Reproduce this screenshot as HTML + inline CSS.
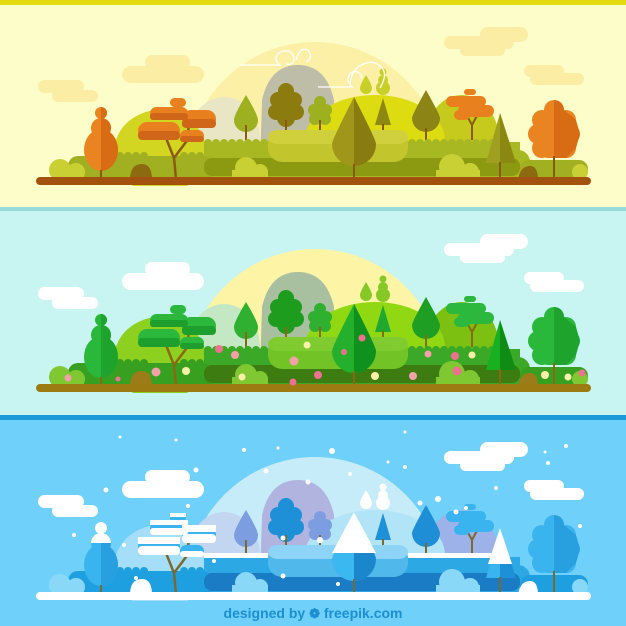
<!DOCTYPE html>
<html><head><meta charset="utf-8"><style>
html,body{margin:0;padding:0;width:626px;height:626px;overflow:hidden;background:#6fd0fa}
svg{display:block}
</style></head><body>
<svg width="626" height="626" viewBox="0 0 626 626" xmlns="http://www.w3.org/2000/svg">
<defs>
<clipPath id="cp"><rect x="0" y="0" width="626" height="186"/></clipPath>
<g id="scene" clip-path="url(#cp)">
  <!-- sun / dome -->
  <path d="M187 170 A128 128 0 0 1 443 170Z" style="fill:var(--sun)"/>
  <!-- clouds -->
  <g style="fill:var(--cloud)">
    <rect x="38" y="80" width="46" height="13" rx="6.5"/><rect x="52" y="90" width="46" height="12" rx="6"/>
    <rect x="145" y="55" width="45" height="14" rx="7"/><rect x="122" y="66" width="82" height="17" rx="8.5"/>
    <rect x="480" y="27" width="48" height="15" rx="7.5"/><rect x="444" y="36" width="70" height="13" rx="6.5"/><rect x="460" y="45" width="45" height="11" rx="5.5"/>
    <rect x="524" y="65" width="40" height="12" rx="6"/><rect x="530" y="73" width="54" height="12" rx="6"/>
  </g>
  <!-- hills -->
  <ellipse cx="224" cy="140" rx="36" ry="43" style="fill:var(--hill0)"/>
  <path d="M260 165 L262 100 Q270 65 298 65 Q326 65 334 100 L336 165Z" style="fill:var(--mtn)"/>
  <ellipse cx="160" cy="152" rx="46" ry="42" style="fill:var(--hillL)"/>
  <ellipse cx="462" cy="140" rx="37" ry="45" style="fill:var(--hillR2)"/>
  <ellipse cx="375" cy="140" rx="70" ry="45" style="fill:var(--hillR)"/>
  <g style="fill:var(--tiny)">
    <path d="M366 75 Q360 85 360 88 A6 6 0 0 0 372 88 Q372 85 366 75Z"/>
    <circle cx="383" cy="72" r="3.5"/><circle cx="383" cy="80" r="5"/><circle cx="383" cy="88" r="7"/>
  </g>
  <path d="M246 95 Q234 115 234 120 A12 12 0 0 0 258 120 Q258 115 246 95Z" style="fill:var(--tdl)"/>
  <rect x="245" y="125" width="2" height="15" style="fill:var(--trunk)"/>
  <g style="fill:var(--ctree)">
    <circle cx="286" cy="91" r="8"/><circle cx="278" cy="100" r="8"/><circle cx="294" cy="100" r="8"/><circle cx="276" cy="112" r="8"/><circle cx="296" cy="112" r="8"/><circle cx="286" cy="118" r="9"/><circle cx="286" cy="104" r="10"/>
  </g>
  <rect x="285" y="120" width="2" height="12" style="fill:var(--trunk)"/>
  <g style="fill:var(--tdl)">
    <circle cx="320" cy="102" r="6"/><circle cx="314" cy="110" r="6"/><circle cx="326" cy="110" r="6"/><circle cx="315" cy="119" r="6"/><circle cx="325" cy="119" r="6"/><circle cx="320" cy="113" r="7"/>
  </g>
  <rect x="319" y="120" width="2" height="12" style="fill:var(--trunk)"/>
  <path d="M383 98 L375 125 L391 125Z" style="fill:var(--pine)"/><rect x="382" y="124" width="2" height="6" style="fill:var(--trunk)"/>
  <path d="M426 90 Q412 115 412 118 A14 14 0 0 0 440 118 Q440 115 426 90Z" style="fill:var(--tdd)"/>
  <rect x="425" y="128" width="2" height="12" style="fill:var(--trunk)"/>
  <path d="M472 140 L472 125 L465 112 M472 125 L480 110" style="stroke:var(--trunk);stroke-width:2;fill:none"/>
  <g style="fill:var(--layer)">
    <rect x="464" y="89" width="12" height="6" rx="3"/><rect x="446" y="96" width="40" height="11" rx="5.5"/><rect x="458" y="105" width="36" height="12" rx="6"/><rect x="454" y="110" width="16" height="10" rx="5"/>
  </g>
  <!-- hedges -->
  <g style="fill:var(--hedge2)">
    <rect x="204" y="142" width="316" height="36"/>
    <circle cx="208" cy="143" r="4"/><circle cx="216" cy="143" r="4"/><circle cx="224" cy="143" r="4"/><circle cx="232" cy="143" r="4"/><circle cx="240" cy="143" r="4"/><circle cx="248" cy="143" r="4"/><circle cx="256" cy="143" r="4"/><circle cx="264" cy="143" r="4"/>
    <circle cx="412" cy="143" r="4"/><circle cx="420" cy="143" r="4"/><circle cx="428" cy="143" r="4"/><circle cx="436" cy="143" r="4"/><circle cx="444" cy="143" r="4"/><circle cx="452" cy="143" r="4"/><circle cx="460" cy="143" r="4"/><circle cx="468" cy="143" r="4"/><circle cx="476" cy="143" r="4"/><circle cx="484" cy="143" r="4"/><circle cx="492" cy="143" r="4"/>
    <rect x="500" y="150" width="30" height="28" rx="12"/>
  </g>
  <g style="fill:var(--hedge1)">
    <rect x="68" y="156" width="145" height="24" rx="10"/>
    <circle cx="120" cy="156" r="4"/><circle cx="128" cy="156" r="4"/><circle cx="136" cy="156" r="4"/><circle cx="144" cy="156" r="4"/><circle cx="184" cy="156" r="4"/><circle cx="192" cy="156" r="4"/><circle cx="200" cy="156" r="4"/>
    <rect x="520" y="160" width="68" height="20" rx="9"/>
  </g>
  <rect x="204" y="158" width="316" height="18" rx="8" style="fill:var(--band)"/>
  <rect x="268" y="130" width="140" height="32" rx="14" style="fill:var(--bush)"/>
  <rect x="268" y="130" width="140" height="14" rx="10" style="fill:var(--bushT)"/>
  <g style="fill:var(--sbush)">
    <circle cx="60" cy="170" r="11"/><circle cx="76" cy="172" r="9"/>
    <circle cx="246" cy="168" r="11"/><circle cx="260" cy="172" r="8"/><rect x="232" y="170" width="36" height="10"/>
    <circle cx="452" cy="167" r="13"/><circle cx="470" cy="172" r="9"/><rect x="436" y="170" width="44" height="10"/>
    <circle cx="580" cy="172" r="8"/>
  </g>
  <path d="M130 180 Q130 164 142 164 Q152 164 152 180Z" style="fill:var(--mound)"/>
  <path d="M518 180 Q520 166 530 166 Q538 166 538 180Z" style="fill:var(--mound)"/>
  <path d="M354 97 Q332 140 332 144 A22 22 0 0 0 376 144 Q376 140 354 97Z" style="fill:var(--tdA)"/>
  <path d="M354 97 Q376 140 376 144 A22 22 0 0 1 354 166Z" style="fill:var(--tdB)"/>
  <rect x="353" y="164" width="2" height="15" style="fill:var(--trunk)"/>
  <path d="M500 113 L486 163 L516 163Z" style="fill:var(--pineA)"/>
  <path d="M500 113 L516 163 L500 163Z" style="fill:var(--pineB)"/>
  <rect x="499" y="162" width="2" height="17" style="fill:var(--trunk)"/>
  <g style="fill:var(--or1)">
    <circle cx="101" cy="113" r="6"/><circle cx="101" cy="128" r="10"/><ellipse cx="101" cy="150" rx="17" ry="21"/>
  </g>
  <path d="M101 107 A6 6 0 0 1 101 119Z M101 118 A10 10 0 0 1 101 138Z M101 129 A17 21 0 0 1 101 171Z" style="fill:var(--or2)"/>
  <rect x="100" y="170" width="2" height="9" style="fill:var(--trunk)"/>
  <path d="M176 179 L174 158 L166 138 M174 158 L186 142 L196 132 M186 142 L190 120" style="stroke:var(--trunk);stroke-width:2.5;fill:none"/>
  <g style="fill:var(--layer)">
    <rect x="170" y="98" width="16" height="9" rx="4.5"/><rect x="150" y="107" width="38" height="13" rx="6.5"/>
    <rect x="182" y="110" width="34" height="18" rx="9"/><rect x="138" y="122" width="42" height="18" rx="9"/><rect x="180" y="130" width="24" height="12" rx="6"/>
  </g>
  <g style="fill:var(--layer2)">
    <rect x="150" y="113" width="38" height="7" rx="3"/><rect x="182" y="119" width="34" height="9" rx="4"/><rect x="138" y="131" width="42" height="9" rx="4"/><rect x="180" y="136" width="24" height="6" rx="3"/>
  </g>
  <g style="fill:var(--or1)">
    <circle cx="554" cy="110" r="10"/><circle cx="542" cy="120" r="10"/><circle cx="566" cy="120" r="10"/><circle cx="538" cy="134" r="10"/><circle cx="570" cy="134" r="10"/><circle cx="542" cy="148" r="10"/><circle cx="566" cy="148" r="10"/><rect x="540" y="110" width="28" height="48" rx="8"/>
  </g>
  <path d="M554 100 A10 10 0 0 1 564 110 L576 120 L580 134 L576 148 L566 158 L554 158Z" style="fill:var(--or2)"/>
  <rect x="553" y="156" width="2" height="23" style="fill:var(--trunk)"/>
  <rect x="36" y="177" width="555" height="8" rx="4" style="fill:var(--ground)"/>
</g>
</defs>

<rect x="0" y="0" width="626" height="5" fill="#e2db12"/>
<rect x="0" y="5" width="626" height="202" fill="#fdfdc9"/>
<rect x="0" y="207" width="626" height="4" fill="#97dcd8"/>
<rect x="0" y="211" width="626" height="204" fill="#c8f4f2"/>
<rect x="0" y="415" width="626" height="5" fill="#1a9ad8"/>
<rect x="0" y="420" width="626" height="206" fill="#6fd0fa"/>

<use href="#scene" style="--sun:#fcf0a6;--cloud:#fbeda4;--hill0:#e8e6c4;--mtn:#bdbda8;--hillL:#d2d620;--hillR:#dcdc10;--hillR2:#c6ca1c;--tiny:#c8d028;--tdl:#9cb020;--ctree:#8c7c10;--pine:#8c8810;--tdd:#8c8414;--layer:#e8801e;--layer2:#d0661a;--hedge1:#a0b020;--hedge2:#a8b822;--band:#8c9a12;--bush:#c2c62c;--bushT:#d0d03c;--sbush:#c8d034;--mound:#8c6a10;--tdA:#a0961a;--tdB:#887c10;--pineA:#a0a020;--pineB:#8a8810;--or1:#ea8420;--or2:#d86c14;--trunk:#8a5a10;--ground:#a3520e"/>

<use href="#scene" transform="translate(0,207)" style="--sun:#fdf4a6;--cloud:#ffffff;--hill0:#c4e8c4;--mtn:#a8c0a0;--hillL:#8ed020;--hillR:#90d812;--hillR2:#7cc012;--tiny:#86c826;--tdl:#30b030;--ctree:#1e9c1e;--pine:#20a830;--tdd:#1e9e22;--layer:#2cb83c;--layer2:#1e9e2c;--hedge1:#38a020;--hedge2:#3ca828;--band:#3c7c10;--bush:#72c426;--bushT:#80cc30;--sbush:#80c832;--mound:#9c7c18;--tdA:#24b02c;--tdB:#10901c;--pineA:#18b020;--pineB:#0e8c14;--or1:#2ab83a;--or2:#1ea42c;--trunk:#8a6a10;--ground:#9c7c12"/>

<use href="#scene" transform="translate(0,415)" style="--sun:#c6ecfa;--cloud:#ffffff;--hill0:#c2d6f2;--mtn:#b2b4e0;--hillL:#a4def8;--hillR:#b2e4f8;--hillR2:#9cb2e8;--tiny:#ffffff;--tdl:#7c9ee0;--ctree:#1e90d8;--pine:#1e90d8;--tdd:#1e8ed6;--layer:#3ab4ee;--layer2:#ffffff;--hedge1:#1ea0e0;--hedge2:#2ca8e4;--band:#1a7cc4;--bush:#50b8ea;--bushT:#8ed4f6;--sbush:#8ad8f8;--mound:#ffffff;--tdA:#3cb8f0;--tdB:#1a86cc;--pineA:#3ab4ee;--pineB:#1e90d8;--or1:#3ab4ee;--or2:#28a0e0;--trunk:#7a6a30;--ground:#ffffff"/>

<g fill="none" stroke="#ffffff" stroke-width="1.3">
  <path d="M240 65 L280 65 Q272 58 280 52 Q292 48 294 58 Q294 66 286 64"/>
  <path d="M296 60 Q300 46 308 50 Q314 58 306 62"/>
  <path d="M318 87 L352 87 Q344 78 352 72 Q360 70 362 78"/>
  <path d="M350 84 Q352 64 372 62 Q392 68 380 88"/>
</g>
<g fill="#ffffff">
  <path d="M354 512 L332 553 L376 553Z"/>
  <path d="M500 528 L488 564 L512 564Z"/>
  <circle cx="101" cy="528" r="6"/><path d="M91 543 A10 10 0 0 1 111 543Z"/>
  <rect x="170" y="513" width="16" height="4"/><rect x="150" y="520" width="38" height="5"/><rect x="182" y="525" width="34" height="7"/><rect x="138" y="537" width="42" height="7"/>
  <rect x="204" y="553" width="64" height="5"/><rect x="408" y="553" width="92" height="5"/>
  <circle cx="120" cy="437" r="1.5"/><circle cx="244" cy="450" r="2"/><circle cx="278" cy="448" r="1.5"/><circle cx="332" cy="451" r="3"/><circle cx="196" cy="470" r="2.5"/>
  <circle cx="308" cy="482" r="2.5"/><circle cx="266" cy="471" r="2.5"/><circle cx="106" cy="490" r="2.5"/><circle cx="350" cy="474" r="2"/>
  <circle cx="405" cy="467" r="2"/><circle cx="420" cy="503" r="2.5"/><circle cx="438" cy="499" r="3"/><circle cx="456" cy="512" r="2.5"/>
  <circle cx="496" cy="488" r="2"/><circle cx="545" cy="452" r="1.5"/><circle cx="566" cy="446" r="2"/><circle cx="548" cy="463" r="2"/>
  <circle cx="580" cy="526" r="2"/><circle cx="74" cy="535" r="2"/><circle cx="124" cy="545" r="2"/><circle cx="188" cy="506" r="2"/>
  <circle cx="466" cy="508" r="2"/><circle cx="388" cy="462" r="1.5"/><circle cx="283" cy="538" r="2.5"/><circle cx="320" cy="540" r="3"/>
  <circle cx="348" cy="549" r="3"/><circle cx="283" cy="576" r="2.5"/><circle cx="338" cy="584" r="2"/><circle cx="136" cy="578" r="2"/>
  <circle cx="214" cy="561" r="2"/><circle cx="176" cy="440" r="1.5"/><circle cx="405" cy="432" r="1.5"/>
</g>
<g>
  <circle cx="219" cy="349" r="4" fill="#f07090"/><circle cx="235" cy="355" r="4" fill="#f4a0a8"/><circle cx="156" cy="372" r="4.5" fill="#f4a0a8"/><circle cx="186" cy="371" r="4" fill="#fcf0a8"/>
  <circle cx="294" cy="361" r="4.5" fill="#f4a0a8"/><circle cx="307" cy="345" r="3.5" fill="#fcf0a8"/><circle cx="318" cy="375" r="4" fill="#f07090"/><circle cx="293" cy="382" r="3.5" fill="#f07090"/>
  <circle cx="344" cy="352" r="3" fill="#f07090"/><circle cx="362" cy="338" r="3.5" fill="#f07090"/><circle cx="375" cy="376" r="4" fill="#fcf0a8"/><circle cx="413" cy="376" r="4" fill="#f4a0a8"/>
  <circle cx="428" cy="354" r="3.5" fill="#f4a0a8"/><circle cx="455" cy="356" r="4" fill="#f07090"/><circle cx="472" cy="355" r="3.5" fill="#fcf0a8"/><circle cx="457" cy="371" r="4.5" fill="#f07090"/>
  <circle cx="242" cy="377" r="3.5" fill="#fcf0a8"/><circle cx="68" cy="378" r="3.5" fill="#f4a0a8"/><circle cx="545" cy="375" r="4" fill="#fcf0a8"/><circle cx="568" cy="377" r="3.5" fill="#fcf0a8"/><circle cx="582" cy="373" r="3.5" fill="#f07090"/>
  <circle cx="118" cy="379" r="2.5" fill="#f07090"/>
</g>
<text x="313" y="618" text-anchor="middle" font-family="Liberation Sans, sans-serif" font-weight="bold" font-size="14" fill="#1b8fd2">designed by <tspan font-size="13">❁</tspan> freepik.com</text>
</svg>
</body></html>
